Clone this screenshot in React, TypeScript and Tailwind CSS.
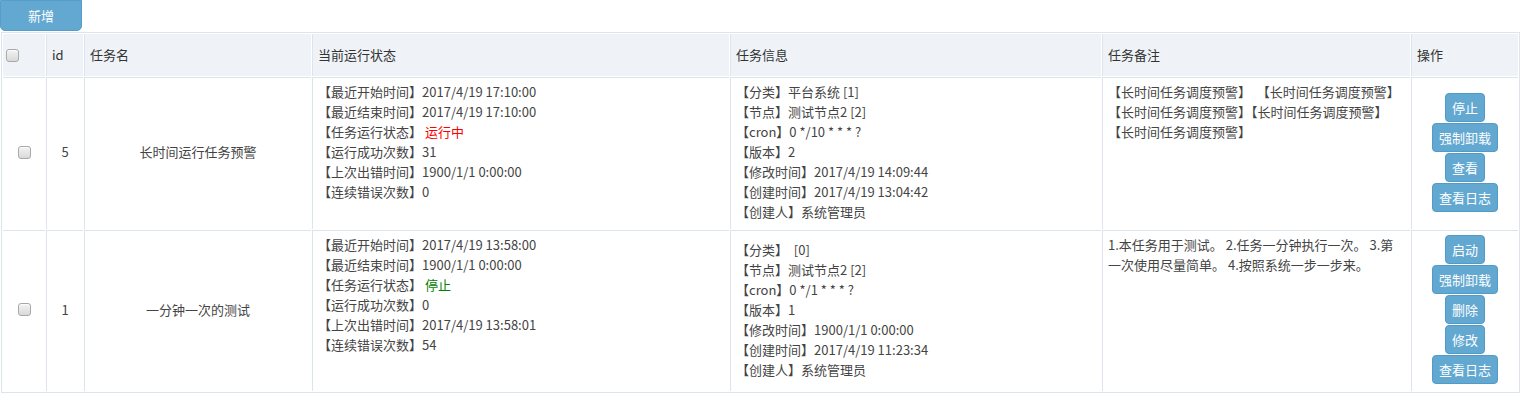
import React from "react";

type Line = { label: string; value: string; tone?: "red" | "green" };

type Job = {
  id: number;
  name: string;
  status: Line[];
  info: Line[];
  remark: string[];
  actions: string[];
};

const JOBS: Job[] = [
  {
    id: 5,
    name: "长时间运行任务预警",
    status: [
      { label: "【最近开始时间】", value: "2017/4/19 17:10:00" },
      { label: "【最近结束时间】", value: "2017/4/19 17:10:00" },
      { label: "【任务运行状态】", value: " 运行中", tone: "red" },
      { label: "【运行成功次数】", value: "31" },
      { label: "【上次出错时间】", value: "1900/1/1 0:00:00" },
      { label: "【连续错误次数】", value: "0" },
    ],
    info: [
      { label: "【分类】", value: "平台系统 [1]" },
      { label: "【节点】", value: "测试节点2 [2]" },
      { label: "【cron】", value: "0 */10 * * * ?" },
      { label: "【版本】", value: "2" },
      { label: "【修改时间】", value: "2017/4/19 14:09:44" },
      { label: "【创建时间】", value: "2017/4/19 13:04:42" },
      { label: "【创建人】", value: "系统管理员" },
    ],
    remark: [
      "【长时间任务调度预警】  【长时间任务调度预警】",
      "【长时间任务调度预警】【长时间任务调度预警】",
      "【长时间任务调度预警】",
    ],
    actions: ["停止", "强制卸载", "查看", "查看日志"],
  },
  {
    id: 1,
    name: "一分钟一次的测试",
    status: [
      { label: "【最近开始时间】", value: "2017/4/19 13:58:00" },
      { label: "【最近结束时间】", value: "1900/1/1 0:00:00" },
      { label: "【任务运行状态】", value: " 停止", tone: "green" },
      { label: "【运行成功次数】", value: "0" },
      { label: "【上次出错时间】", value: "2017/4/19 13:58:01" },
      { label: "【连续错误次数】", value: "54" },
    ],
    info: [
      { label: "【分类】", value: "  [0]" },
      { label: "【节点】", value: "测试节点2 [2]" },
      { label: "【cron】", value: "0 */1 * * * ?" },
      { label: "【版本】", value: "1" },
      { label: "【修改时间】", value: "1900/1/1 0:00:00" },
      { label: "【创建时间】", value: "2017/4/19 11:23:34" },
      { label: "【创建人】", value: "系统管理员" },
    ],
    remark: ["1.本任务用于测试。 2.任务一分钟执行一次。 3.第", "一次使用尽量简单。 4.按照系统一步一步来。"],
    actions: ["启动", "强制卸载", "删除", "修改", "查看日志"],
  },
];

const HEADERS = ["id", "任务名", "当前运行状态", "任务信息", "任务备注", "操作"];

function CheckBox() {
  return (
    <span className="inline-block h-[13px] w-[13px] rounded-[3px] border border-[#a8a8a8] bg-gradient-to-b from-[#f3f3f3] to-[#d9d9d9] shadow-[inset_0_1px_1px_rgba(255,255,255,0.8)]" />
  );
}

function Lines({ lines }: { lines: Line[] }) {
  return (
    <div className="leading-[20px]">
      {lines.map((line) => (
        <div key={line.label} className="whitespace-pre">
          {line.label}
          <span
            className={
              line.tone === "red" ? "text-[#ff0000]" : line.tone === "green" ? "text-[#008000]" : ""
            }
          >
            {line.value}
          </span>
        </div>
      ))}
    </div>
  );
}

function ActionButton({ label }: { label: string }) {
  return (
    <button
      type="button"
      className="h-[29px] rounded-[4px] border border-[#519bc8] bg-[#62a8d1] px-[6px] text-[13px] leading-[27px] text-white"
    >
      {label}
    </button>
  );
}

export default function App() {
  const cell = "border-t border-[#dce4ec] pt-[4px] pb-[7px] px-[5px]";

  return (
    <div className="min-h-screen bg-white text-[13px] text-[#444] [font-family:'Noto_Sans_CJK_SC',sans-serif]">
      <button
        type="button"
        className="mb-px h-[31px] w-[82px] rounded-b-[5px] border border-[#559dca] bg-[#62a8d1] text-[13px] text-white"
      >
        新增
      </button>

      <div className="ml-px grid w-[1519px] grid-cols-[42px_37px_227px_417px_371px_308px_107px] gap-px border border-[#dce4ec] p-px">
        <div className="flex h-[42px] items-center bg-[#eff3f8] pl-[3px]">
          <CheckBox />
        </div>
        {HEADERS.map((title) => (
          <div
            key={title}
            className="flex h-[42px] items-center border-l border-[#dce4ec] bg-[#eff3f8] pl-[5px] text-[#333]"
          >
            {title}
          </div>
        ))}

        {JOBS.map((job) => (
          <React.Fragment key={job.id}>
            <div className={`${cell} flex items-center justify-center`}>
              <CheckBox />
            </div>
            <div className={`${cell} flex items-center justify-center border-l`}>{job.id}</div>
            <div className={`${cell} flex items-center justify-center border-l`}>{job.name}</div>
            <div className={`${cell} border-l`}>
              <Lines lines={job.status} />
            </div>
            <div className={`${cell} flex items-center border-l`}>
              <Lines lines={job.info} />
            </div>
            <div className={`${cell} border-l leading-[20px]`}>
              {job.remark.map((text) => (
                <div key={text} className="whitespace-pre">
                  {text}
                </div>
              ))}
            </div>
            <div className={`${cell} flex flex-col items-center justify-center gap-px border-l`}>
              {job.actions.map((label) => (
                <ActionButton key={label} label={label} />
              ))}
            </div>
          </React.Fragment>
        ))}
      </div>
    </div>
  );
}
